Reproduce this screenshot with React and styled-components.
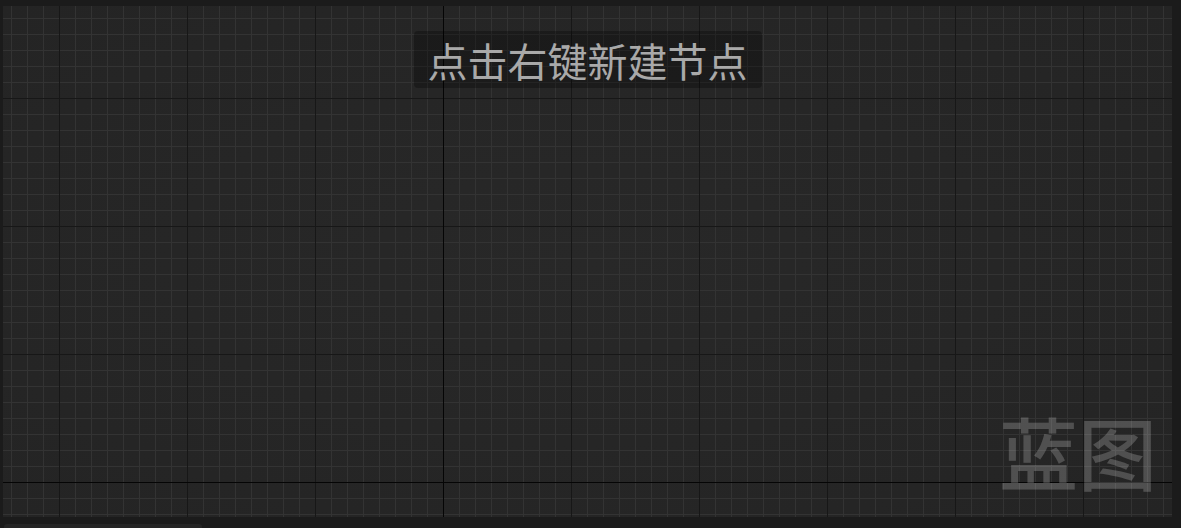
import React from 'react';
import styled, { createGlobalStyle } from 'styled-components';

const GlobalStyle = createGlobalStyle`
  html, body {
    margin: 0;
    padding: 0;
    background: #1a1a1a;
    overflow: hidden;
  }
  #root {
    width: 1181px;
    height: 528px;
  }
`;

const Frame = styled.div`
  width: 100%;
  height: 100%;
  box-sizing: border-box;
  padding: 6px 9px 11px 3px;
  background: #1b1b1b;
  position: relative;
`;

const Canvas = styled.div`
  position: relative;
  width: 100%;
  height: 100%;
  display: flex;
  justify-content: center;
  align-items: flex-start;
  padding-top: 25px;
  box-sizing: border-box;
  overflow: hidden;
  background-color: #262626;
  background-image:
    linear-gradient(to right, #050505 1px, transparent 1px),
    linear-gradient(to bottom, #050505 1px, transparent 1px),
    linear-gradient(to right, #171717 1px, transparent 1px),
    linear-gradient(to bottom, #171717 1px, transparent 1px),
    linear-gradient(to right, #333333 1px, transparent 1px),
    linear-gradient(to bottom, #333333 1px, transparent 1px),
    radial-gradient(ellipse at center, #282828 0%, #242424 100%);
  background-size:
    2px 100%,
    100% 2px,
    128px 128px,
    128px 128px,
    16px 16px,
    16px 16px,
    100% 100%;
  background-repeat:
    no-repeat,
    no-repeat,
    repeat,
    repeat,
    repeat,
    repeat,
    no-repeat;
  background-position:
    439.5px 0,
    0 475.5px,
    56px 92px,
    56px 92px,
    8px 12px,
    8px 12px,
    0 0;
`;

const Hint = styled.div`
  padding: 0 14px 0 14px;
  height: 57px;
  display: flex;
  align-items: center;
  background: rgba(0, 0, 0, 0.28);
  border-radius: 4px;
  color: #a9a9a9;
  font-family: "Noto Sans CJK SC", "Noto Sans", sans-serif;
  font-size: 40px;
  line-height: 1;
  white-space: nowrap;
`;

const Watermark = styled.div`
  position: absolute;
  right: 15px;
  bottom: 18px;
  color: rgba(255, 255, 255, 0.2);
  font-family: "Noto Sans CJK SC", "Noto Sans", sans-serif;
  font-size: 79px;
  font-weight: 500;
  line-height: 1.2;
  white-space: nowrap;
  pointer-events: none;
`;

const ScrollThumb = styled.div`
  position: absolute;
  left: 4px;
  bottom: 0;
  width: 198px;
  height: 4px;
  border-radius: 3px 3px 0 0;
  background: #252525;
`;

export default function App() {
  return (
    <>
      <GlobalStyle />
      <Frame>
        <Canvas>
          <Hint>点击右键新建节点</Hint>
          <Watermark>蓝图</Watermark>
        </Canvas>
        <ScrollThumb />
      </Frame>
    </>
  );
}
